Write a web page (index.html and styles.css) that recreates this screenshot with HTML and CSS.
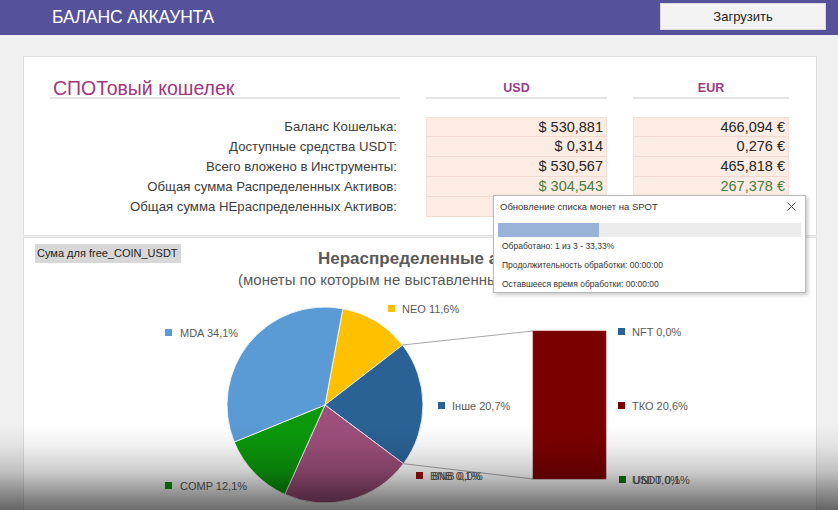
FILE: index.html
```html
<!DOCTYPE html>
<html lang="ru">
<head>
<meta charset="utf-8">
<title>Баланс аккаунта</title>
<link rel="stylesheet" href="styles.css">
</head>
<body>
<header class="topbar">
  <div class="topbar-title">БАЛАНС АККАУНТА</div>
  <button class="load-btn">Загрузить</button>
</header>

<main class="main">
  <section class="card wallet">
    <div class="wallet-grid">
      <div class="head head-title">СПОТовый кошелек</div>
      <div class="head head-cur">USD</div>
      <div class="head head-cur">EUR</div>

      <div class="labels">
        <div class="lbl">Баланс Кошелька:</div>
        <div class="lbl">Доступные средства USDT:</div>
        <div class="lbl">Всего вложено в Инструменты:</div>
        <div class="lbl">Общая сумма Распределенных Активов:</div>
        <div class="lbl">Общая сумма НЕраспределенных Активов:</div>
      </div>
      <div class="vals">
        <div class="val">$ 530,881</div>
        <div class="val">$ 0,314</div>
        <div class="val">$ 530,567</div>
        <div class="val val-green">$ 304,543</div>
        <div class="val">$ 226,024</div>
      </div>
      <div class="vals">
        <div class="val">466,094 €</div>
        <div class="val">0,276 €</div>
        <div class="val">465,818 €</div>
        <div class="val val-green">267,378 €</div>
        <div class="val">198,440 €</div>
      </div>
    </div>
  </section>

  <section class="card chart">
    <div class="chart-head">
      <span class="series-tag">Сума для free_COIN_USDT</span>
      <span class="chart-title">Нераспределенные активы</span>
    </div>
    <div class="chart-sub">(монеты по которым не выставленны ордера)</div>
    <svg class="chart-svg" width="792" height="300" viewBox="24 289 792 300">
      <g stroke="#ffffff" stroke-width="0.8">
        <path d="M325 405 L342.86 308.64 A98 98 0 0 1 402.54 345.07 Z" fill="#ffc000"/>
        <path d="M325 405 L402.54 345.07 A98 98 0 0 1 403.47 463.70 Z" fill="#2b6296"/>
        <path d="M325 405 L403.47 463.70 A98 98 0 0 1 284.83 494.39 Z" fill="#9d4f7b"/>
        <path d="M325 405 L284.83 494.39 A98 98 0 0 1 234.26 442.03 Z" fill="#0b990b"/>
        <path d="M325 405 L234.26 442.03 A98 98 0 0 1 342.86 308.64 Z" fill="#5b9bd5"/>
      </g>
      <line x1="402.5" y1="345" x2="533" y2="331" stroke="#a6a6a6" stroke-width="1"/>
      <line x1="403.5" y1="463.7" x2="533" y2="479" stroke="#a6a6a6" stroke-width="1"/>
      <rect x="533" y="331" width="73" height="148" fill="#7a0000" stroke="#8a1a1a" stroke-width="0.6"/>

      <g class="legend">
        <rect x="165" y="329" width="7" height="7" fill="#5b9bd5"/>
        <text x="180" y="337">MDA 34,1%</text>
        <rect x="388" y="305" width="7" height="7" fill="#ffc000"/>
        <text x="402" y="313">NEO 11,6%</text>
        <rect x="438" y="402" width="7" height="7" fill="#2b6296"/>
        <text x="452" y="410">Інше 20,7%</text>
        <rect x="618" y="328" width="7" height="7" fill="#2b6296"/>
        <text x="632" y="336">NFT 0,0%</text>
        <rect x="618" y="402" width="7" height="7" fill="#7a0000"/>
        <text x="632" y="410">ТКО 20,6%</text>
        <rect x="416" y="472" width="7" height="7" fill="#9a0a0a"/>
        <text x="430" y="480">BNB 0,1%</text>
        <text x="432" y="480">BNB 0,0%</text>
        <rect x="619" y="476" width="7" height="7" fill="#0b7a0b"/>
        <text x="632" y="484">USDT 0,1%</text>
        <text x="633" y="484">UNI 0,0%</text>
        <rect x="165" y="482" width="7" height="7" fill="#0b990b"/>
        <text x="180" y="490">COMP 12,1%</text>
      </g>
    </svg>
  </section>
</main>

<div class="dialog">
  <div class="dialog-head">
    <span class="dialog-title">Обновление списка монет на SPOT</span>
    <svg class="dialog-close" width="9" height="9" viewBox="0 0 9 9">
      <path d="M0.5 0.5 L8.5 8.5 M8.5 0.5 L0.5 8.5" stroke="#444" stroke-width="1" fill="none"/>
    </svg>
  </div>
  <div class="progress"><div class="progress-fill" style="width: 101px"></div></div>
  <div class="dialog-line">Обработано: 1 из 3 - 33,33%</div>
  <div class="dialog-line">Продолжительность обработки: 00:00:00</div>
  <div class="dialog-line">Оставшееся время обработки: 00:00:00</div>
</div>

<div class="vignette"></div>
</body>
</html>
```

FILE: styles.css
```css
html, body {
  margin: 0;
  padding: 0;
  overflow: hidden;
  height: 510px;
}

body {
  background: #f0f0f0;
  font-family: "Liberation Sans", Arial, sans-serif;
  color: #404040;
  position: relative;
}

.topbar {
  height: 35px;
  background: #56519b;
  display: flex;
  align-items: center;
  justify-content: space-between;
  padding: 0 12px 0 52px;
  box-sizing: border-box;
}

.topbar-title {
  color: #ffffff;
  font-size: 17.5px;
  letter-spacing: -0.2px;
}

.load-btn {
  width: 166px;
  height: 27px;
  margin-top: -2px;
  background: #f3f3f3;
  border: 1px solid #d8d8d8;
  font-family: "Liberation Sans", Arial, sans-serif;
  font-size: 13px;
  color: #222;
  padding: 0;
}

.main {
  padding: 21px 0 0 23px;
}

.card {
  width: 794px;
  box-sizing: border-box;
  background: #ffffff;
  border: 1px solid #dedede;
}

.wallet {
  height: 180px;
  padding: 23px 0 0 26px;
}

.wallet-grid {
  display: grid;
  grid-template-columns: 350px 181px 156px;
  column-gap: 26px;
  align-items: end;
}

.head {
  border-bottom: 2px solid #e4e4e4;
  line-height: 17px;
  height: 17px;
}

.head-title {
  font-size: 19.5px;
  color: #a2357f;
  padding-left: 3px;
}

.head-cur {
  font-size: 12.5px;
  font-weight: bold;
  color: #9b3b86;
  text-align: center;
}

.labels, .vals {
  margin-top: 18px;
}

.lbl {
  height: 20px;
  line-height: 20px;
  font-size: 13.2px;
  text-align: right;
  padding-right: 3px;
  color: #3c3c3c;
  white-space: nowrap;
}

.vals {
  background: #fdece4;
  border: 1px solid #f4e0d7;
  border-bottom: none;
}

.val {
  box-sizing: border-box;
  height: 20px;
  line-height: 19px;
  font-size: 14.5px;
  text-align: right;
  padding-right: 3px;
  border-bottom: 1px solid #f1d9cf;
  color: #262626;
}

.vals .val:first-child {
  height: 19px;
}

.val-green {
  color: #4a7c3c;
}

.chart {
  margin-top: 1px;
  padding-top: 6px;
  height: 300px;
}

.chart-head {
  display: flex;
  align-items: flex-start;
  padding-left: 11px;
  height: 25px;
}

.series-tag {
  width: 146px;
  box-sizing: border-box;
  background: #d7d7d7;
  color: #1e1e1e;
  font-size: 11px;
  line-height: 19px;
  height: 19px;
  padding: 0 0 0 2px;
  white-space: nowrap;
}

.chart-title {
  margin-left: 137px;
  margin-top: 5px;
  font-size: 17px;
  line-height: 20px;
  font-weight: bold;
  color: #595959;
  white-space: nowrap;
}

.chart-sub {
  margin-top: 2px;
  padding-left: 214px;
  font-size: 15px;
  line-height: 18px;
  color: #595959;
  white-space: nowrap;
}

.chart-svg {
  display: block;
}

.legend text {
  font-family: "Liberation Sans", Arial, sans-serif;
  font-size: 11px;
  fill: #595959;
}

.dialog {
  position: absolute;
  left: 493px;
  top: 195px;
  width: 313px;
  height: 98px;
  box-sizing: border-box;
  background: #ffffff;
  border: 1px solid #b8b8b8;
  box-shadow: 2px 2px 4px rgba(0, 0, 0, 0.22);
  padding: 0 0 0 4px;
}

.dialog-head {
  height: 20px;
  display: flex;
  align-items: center;
  justify-content: space-between;
  padding: 0 9px 0 2px;
}

.dialog-title {
  font-size: 9.5px;
  color: #333;
}

.dialog-close {
  display: block;
}

.progress {
  margin-top: 7px;
  width: 303px;
  height: 14px;
  background: #ececec;
}

.progress-fill {
  height: 100%;
  background: #97b3d7;
}

.dialog-line {
  height: 19px;
  line-height: 19px;
  font-size: 8.5px;
  color: #333;
  padding-left: 4px;
  white-space: nowrap;
}

.vignette {
  position: absolute;
  left: 0;
  right: 0;
  top: 425px;
  height: 85px;
  background: linear-gradient(to bottom,
    rgba(0, 0, 0, 0) 0%,
    rgba(0, 0, 0, 0.06) 25%,
    rgba(0, 0, 0, 0.2) 55%,
    rgba(0, 0, 0, 0.42) 80%,
    rgba(0, 0, 0, 0.58) 100%);
  pointer-events: none;
}
```
